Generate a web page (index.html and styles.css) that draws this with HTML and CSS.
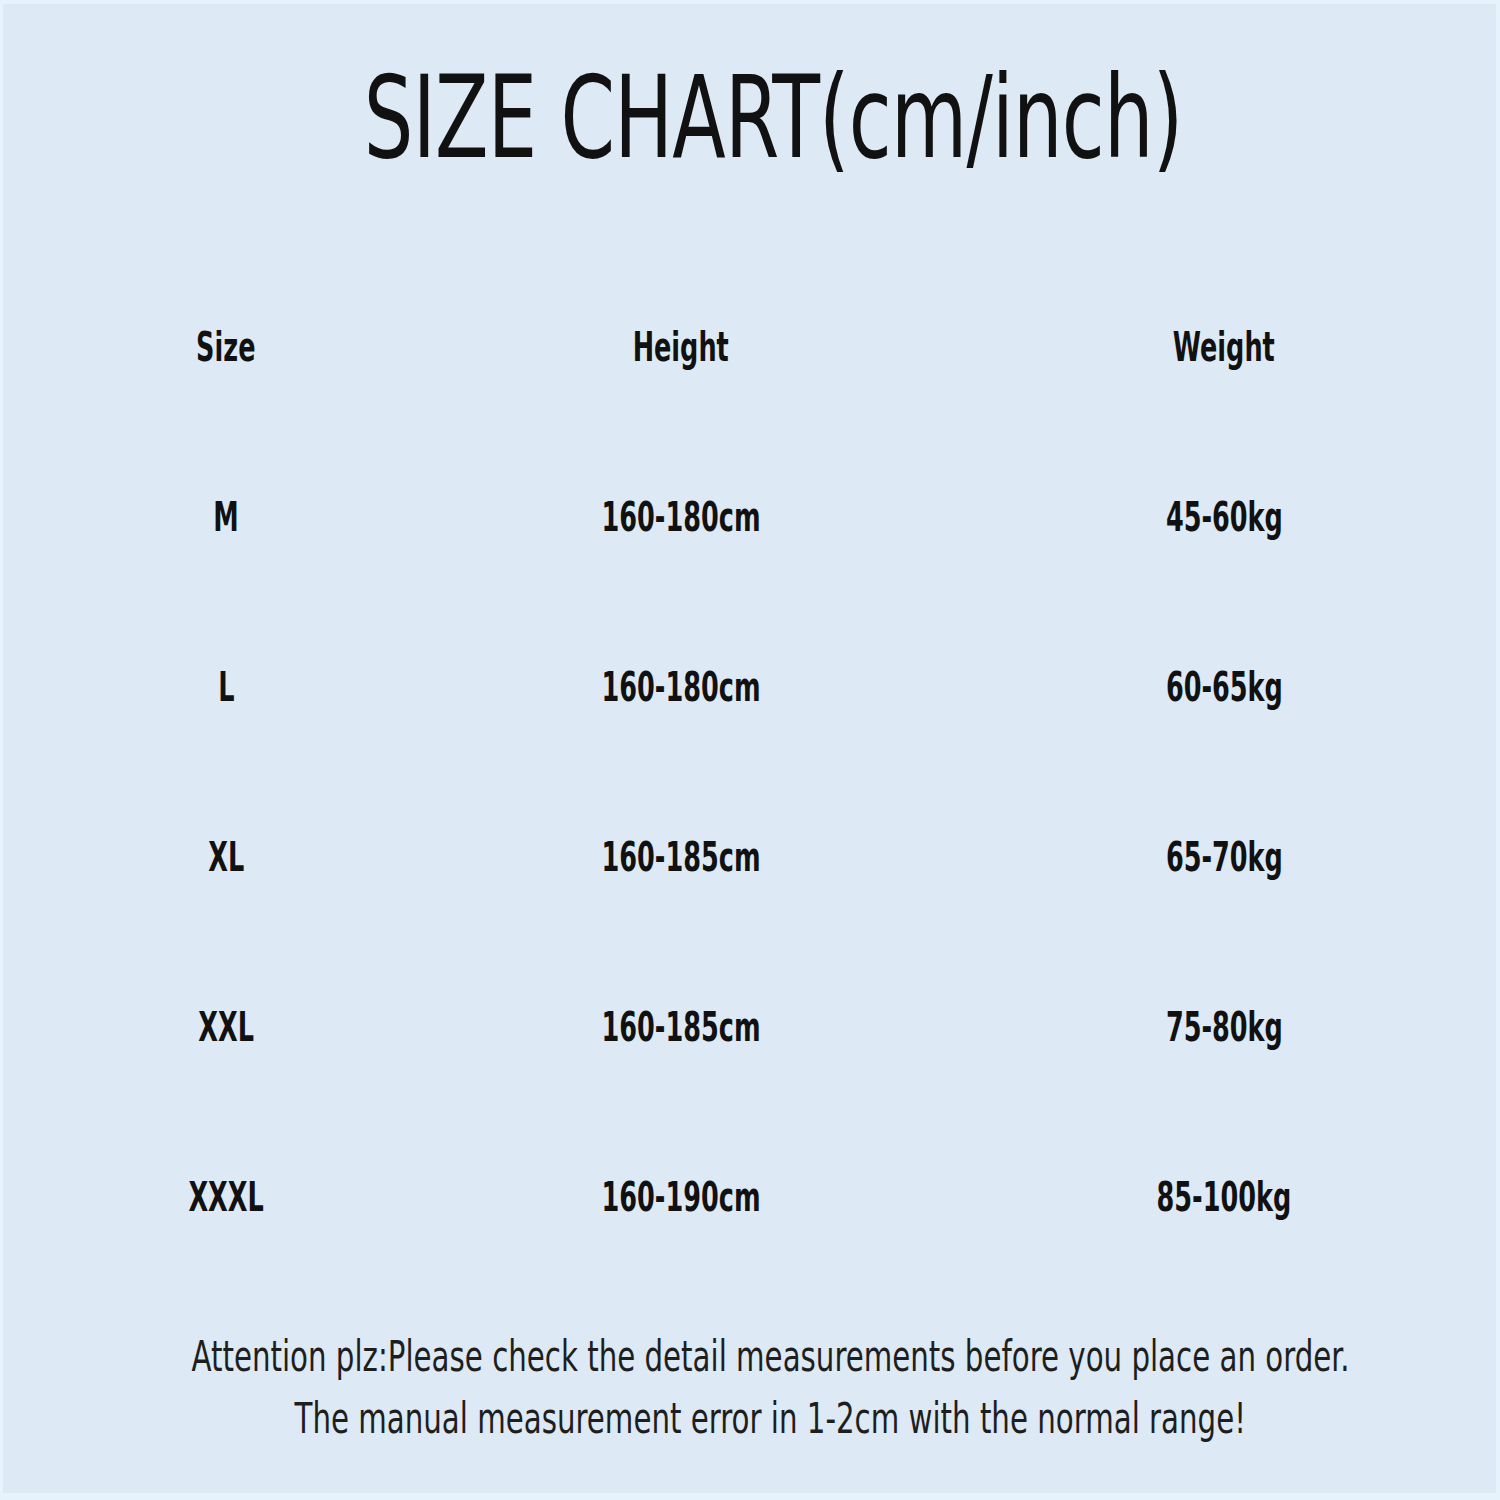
FILE: index.html
```html
<!DOCTYPE html>
<html lang="en">
<head>
<meta charset="utf-8">
<title>Size Chart</title>
<link rel="stylesheet" href="styles.css">
</head>
<body>
<div class="page">
  <h1 class="title"><span class="title-text">SIZE CHART(cm/inch)</span></h1>
  <div class="chart">
    <div class="cell head"><span>Size</span></div>
    <div class="cell head"><span>Height</span></div>
    <div class="cell head"><span>Weight</span></div>

    <div class="cell"><span>M</span></div>
    <div class="cell"><span>160-180cm</span></div>
    <div class="cell"><span>45-60kg</span></div>

    <div class="cell"><span>L</span></div>
    <div class="cell"><span>160-180cm</span></div>
    <div class="cell"><span>60-65kg</span></div>

    <div class="cell"><span>XL</span></div>
    <div class="cell"><span>160-185cm</span></div>
    <div class="cell"><span>65-70kg</span></div>

    <div class="cell"><span>XXL</span></div>
    <div class="cell"><span>160-185cm</span></div>
    <div class="cell"><span>75-80kg</span></div>

    <div class="cell"><span>XXXL</span></div>
    <div class="cell"><span>160-190cm</span></div>
    <div class="cell"><span>85-100kg</span></div>
  </div>
  <div class="note">
    <p class="note-line"><span>Attention plz:Please check the detail measurements before you place an order.</span></p>
    <p class="note-line"><span>The manual measurement error in 1-2cm with the normal range!</span></p>
  </div>
</div>
</body>
</html>
```

FILE: styles.css
```css
html, body {
  margin: 0;
  padding: 0;
  background: #e7f3fc;
}

.page {
  box-sizing: border-box;
  width: 1500px;
  height: 1500px;
  border-style: solid;
  border-color: #e7f3fc;
  border-width: 4px 4px 7px 3px;
  background: #dde9f4;
  display: flex;
  flex-direction: column;
  color: #111;
}

.title {
  margin: 0;
  padding: 57px 0 0 48px;
  height: 258px;
  box-sizing: border-box;
  text-align: center;
  font-family: "DejaVu Sans Condensed", "DejaVu Sans", sans-serif;
  font-weight: normal;
  font-size: 114px;
  line-height: 114px;
  white-space: nowrap;
}

.title-text {
  display: inline-block;
  transform: scaleX(0.762);
  letter-spacing: -1px;
}

.chart {
  display: grid;
  grid-template-columns: 300px 610px 476px;
  grid-auto-rows: 170px;
  padding-left: 73px;
}

.cell {
  display: flex;
  align-items: center;
  justify-content: center;
  font-family: "DejaVu Sans Condensed", "DejaVu Sans", sans-serif;
  font-weight: bold;
  font-size: 40px;
  line-height: 1;
  white-space: nowrap;
}

.cell span {
  display: inline-block;
  transform: scaleX(0.71);
}

.note {
  padding: 44px 0 0 42px;
  text-align: center;
  font-family: "DejaVu Sans Condensed", "DejaVu Sans", sans-serif;
  font-size: 36px;
  color: #1e1e1e;
}

.note-line {
  margin: 0;
  height: 62px;
  line-height: 62px;
  white-space: nowrap;
}

.note-line span {
  display: inline-block;
  transform: scale(0.904, 1.2);
}
```
